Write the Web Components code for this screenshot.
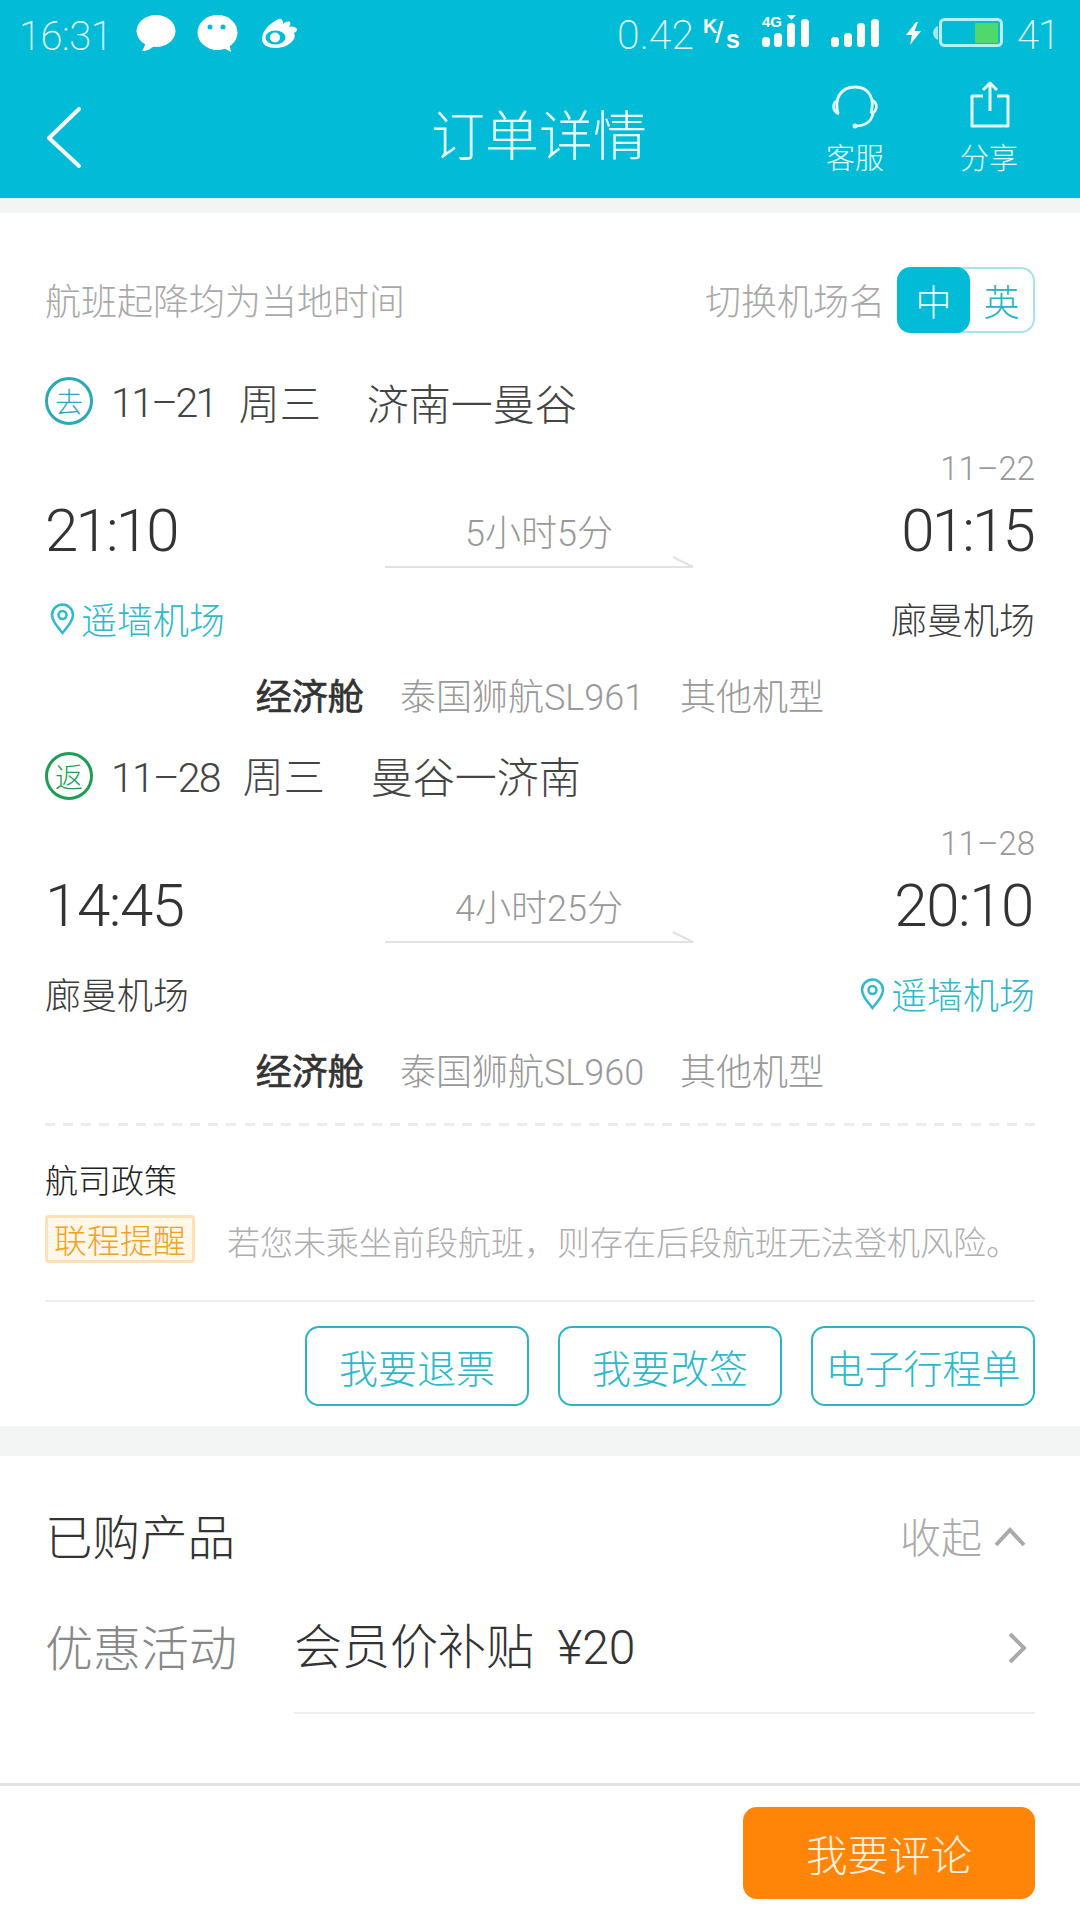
<!DOCTYPE html>
<html lang="zh-CN">
<head>
<meta charset="utf-8">
<title>订单详情</title>
<style>
  html, body { margin: 0; padding: 0; }
  body {
    width: 1080px;
    height: 1920px;
    overflow: hidden;
    display: flex;
    flex-direction: column;
    background: #f3f4f4;
    font-family: Roboto, "Noto Sans CJK SC", sans-serif;
    font-weight: 300;
    color: #333;
  }
</style>
</head>
<body>
  <app-header></app-header>
  <order-card>
    <flight-leg kind="去" color="#2ba8ba" date="11–21" date-spacing="-2.6" nudge="0" route="济南一曼谷" depart="21:10" arrive="01:15"
      time-spacing="-2.8" arrive-date="11–22" duration="5小时5分" from="遥墙机场" to="廊曼机场" pin="from" flight="泰国狮航SL961"></flight-leg>
    <flight-leg kind="返" color="#1f9d55" date="11–28" date-spacing="-1.8" nudge="-2" route="曼谷一济南" depart="14:45" arrive="20:10"
      time-spacing="-1.4" arrive-date="11–28" duration="4小时25分" from="廊曼机场" to="遥墙机场" pin="to" flight="泰国狮航SL960"></flight-leg>
    <policy-note></policy-note>
    <action-button slot="actions">我要退票</action-button>
    <action-button slot="actions">我要改签</action-button>
    <action-button slot="actions">电子行程单</action-button>
  </order-card>
  <product-section></product-section>
  <bottom-bar>我要评论</bottom-bar>

<script>
class AppHeader extends HTMLElement {
  connectedCallback() {
    const shadow = this.attachShadow({ mode: "open" });
    shadow.innerHTML = `
      <style>
        :host { display: block; height: 198px; background: #02bbd6; color: #e6fbff; flex: none; }
        .status { height: 66px; display: flex; align-items: center; padding: 4px 21px 0 19px; box-sizing: border-box; }
        .status svg { display: block; flex: none; }
        .clock { font-size: 40px; font-weight: 200; letter-spacing: -0.5px; width: 117px; margin-top: 2px; }
        .left { display: flex; align-items: center; flex: 1; }
        .speed { font-size: 41px; font-weight: 200; }
        .unit { width: 38px; height: 38px; margin: 0 21px 0 9px; position: relative; font-weight: 700; font-family: "Liberation Sans", sans-serif; color: #fff; line-height: 1; }
        .unit span { position: absolute; }
        .bat { font-size: 40px; font-weight: 200; letter-spacing: -1px; margin-left: 14px; }
        .nav { height: 132px; display: grid; grid-template-columns: 1fr 216px 1fr; align-items: center; padding: 0 24px 0 22px; }
        .back { padding: 12px 0 0 24px; display: flex; }
        .title { font-size: 54px; color: #e6fbff; margin-top: 1px; white-space: nowrap; }
        .actions { display: flex; justify-content: flex-end; align-self: start; padding-top: 14px; }
        .action { width: 134px; display: flex; flex-direction: column; align-items: center; font-size: 29px; line-height: 36px; }
        .action svg { height: 50px; display: block; margin-bottom: 11px; }
      </style>
      <div class="status">
        <div class="left">
          <span class="clock">16:31</span>
          <svg width="40" height="37" viewBox="0 0 40 37" style="margin-top:-4px">
            <ellipse cx="20" cy="16" rx="19.500" ry="16" fill="#fff"/>
            <path d="M9 26c1 3-1 7-3 10 5 0 9-2 12-5z" fill="#fff"/>
          </svg>
          <svg width="41" height="37" viewBox="0 0 41 37" style="margin:-4px 0 0 21px">
            <ellipse cx="20.500" cy="17.500" rx="20" ry="17.500" fill="#fff"/>
            <path d="M25 32l9 5-2-10z" fill="#fff"/>
            <circle cx="13" cy="12" r="2.500" fill="#02bbd6"/>
            <circle cx="26" cy="12" r="2.500" fill="#02bbd6"/>
          </svg>
          <svg width="36" height="30" viewBox="0 0 36 30" style="margin:-4px 0 0 24px">
            <path fill="#fff" d="M0 21C0 14 6 7 13 3c2-1 5-3 6-2 2 1 2 3 2 5 2-2 5-3 7-2 1 1 0 3-1 5 3-1 7 0 8 2 0 2-1 3-3 4 1 2 1 4 0 6-3 5-10 9-18 9C6 30 0 27 0 21z"/>
            <ellipse cx="13.500" cy="19.500" rx="10" ry="7" fill="#02bbd6"/>
            <circle cx="13" cy="19.500" r="5" fill="#fff"/>
          </svg>
        </div>
        <span class="speed">0.42</span>
        <span class="unit"><span style="left:0;top:0;font-size:20px">K</span><span style="left:12px;top:2px;font-size:30px;font-weight:400">/</span><span style="left:23px;top:11px;font-size:25px">s</span></span>
        <svg width="47" height="32" viewBox="0 0 47 32" style="margin:-8px 22px 0 0">
          <text x="0" y="12" font-family="Liberation Sans" font-size="15" font-weight="700" fill="#fff">4G</text>
          <rect x="0" y="22" width="8" height="10" rx="3.500" fill="#fff"/>
          <rect x="12" y="18" width="8" height="14" rx="3.500" fill="#fff"/>
          <rect x="25" y="8" width="8" height="24" rx="3.500" fill="#fff"/>
          <rect x="39" y="4" width="8" height="28" rx="3.500" fill="#fff"/>
          <path d="M25 0h9l-4.500 5z" fill="#fff"/>
        </svg>
        <svg width="48" height="28" viewBox="0 0 48 28" style="margin:-4px 27px 0 0">
          <rect x="0" y="18" width="8" height="10" rx="3.500" fill="#fff"/>
          <rect x="13" y="14" width="8" height="14" rx="3.500" fill="#fff"/>
          <rect x="26" y="4" width="8" height="24" rx="3.500" fill="#fff"/>
          <rect x="40" y="0" width="8" height="28" rx="3.500" fill="#fff"/>
        </svg>
        <svg width="15" height="23" viewBox="0 0 15 23" style="margin:-3px 12px 0 0"><path d="M10 0 0 13h6L4 23l11-14H8.500L12 0z" fill="#fff"/></svg>
        <svg width="70" height="30" viewBox="0 0 70 30" style="margin-top:-5px">
          <path d="M5 8C2 9 0 12 0 15s2 6 5 7z" fill="#9fe6ef"/>
          <rect x="7.500" y="1.500" width="61" height="26" rx="4" fill="none" stroke="#b6f0f4" stroke-width="3"/>
          <rect x="42" y="5" width="23" height="20" fill="#4fd96a"/>
        </svg>
        <span class="bat">41</span>
      </div>
      <div class="nav">
        <div class="back">
          <svg width="36" height="62" viewBox="0 0 36 62"><path d="M33 2 3 31l30 28" fill="none" stroke="#fff" stroke-width="4" stroke-linecap="round" stroke-linejoin="round"/></svg>
        </div>
        <div class="title">订单详情</div>
        <div class="actions">
          <div class="action">
            <svg width="46" height="50" viewBox="0 0 46 50" fill="none" stroke="#e6fbff" stroke-width="2.800">
              <path d="M6 33C2 18 9 7 23 7c14 0 20 11 16 26"/>
              <path d="M6 20c-6 3-6 11 1 14M40 20c6 3 6 11-1 14"/>
              <path d="M41 34c-2 8-9 12-18 12" stroke-linecap="round"/>
              <circle cx="23" cy="46" r="2.500" fill="#e6fbff" stroke="none"/>
            </svg>
            客服
          </div>
          <div class="action">
            <svg width="40" height="50" viewBox="0 0 40 50" fill="none" stroke="#e6fbff" stroke-width="3" stroke-linejoin="round" style="margin-left:2px">
              <path d="M13 16H2v30h36V16H27"/>
              <path d="M20 31V3M13 10l7-7 7 7"/>
            </svg>
            分享
          </div>
        </div>
      </div>`;
  }
}

class OrderCard extends HTMLElement {
  connectedCallback() {
    const shadow = this.attachShadow({ mode: "open" });
    shadow.innerHTML = `
      <style>
        :host { display: block; flex: none; height: 1213px; margin-top: 15px; padding: 0 45px; box-sizing: border-box; background: #fff; overflow: hidden; }
        .top { height: 66px; margin-top: 54px; display: flex; align-items: center; justify-content: space-between; font-size: 36px; color: #a8a8a8; }
        .top > span, .switch > span { position: relative; top: -1px; }
        .switch { display: flex; align-items: center; }
        .switch > span { margin-right: 12px; }
        .legs { margin-top: 35px; }
        .buttons { display: flex; justify-content: flex-end; gap: 29px; margin-top: 24px; }
      </style>
      <div class="top">
        <span>航班起降均为当地时间</span>
        <div class="switch"><span>切换机场名</span><lang-toggle></lang-toggle></div>
      </div>
      <div class="legs"><slot></slot></div>
      <div class="buttons"><slot name="actions"></slot></div>`;
  }
}

class LangToggle extends HTMLElement {
  connectedCallback() {
    const shadow = this.attachShadow({ mode: "open" });
    shadow.innerHTML = `
      <style>
        :host { display: flex; width: 138px; height: 66px; box-sizing: border-box; border: 2px solid #a6e3ec; border-radius: 14px; font-size: 36px; color: #25b3c8; }
        div { display: flex; align-items: center; justify-content: center; }
        .on { width: 73px; margin: -2px 0 -2px -2px; background: #02bbd6; color: #e6fbff; border-radius: 14px; }
        .off { flex: 1; }
      </style>
      <div class="on">中</div><div class="off">英</div>`;
  }
}

class FlightLeg extends HTMLElement {
  connectedCallback() {
    const a = (n) => this.getAttribute(n);
    const pin = `<svg width="25" height="32" viewBox="0 0 25 32"><path d="M12.500 30C6 22 2 17 2 12a10.500 10.500 0 0 1 21 0c0 5-4 10-10.500 18z" fill="none" stroke="#30b8cc" stroke-width="2.500"/><circle cx="12.500" cy="12" r="4" fill="none" stroke="#30b8cc" stroke-width="2.500"/></svg>`;
    const airport = (name, on) => on
      ? `<span class="port on">${pin}${name}</span>`
      : `<span class="port">${name}</span>`;
    const shadow = this.attachShadow({ mode: "open" });
    shadow.innerHTML = `
      <style>
        :host { display: block; height: 353px; margin-bottom: 22px; }
        .head { height: 66px; display: flex; align-items: center; font-size: 41px; color: #444; }
        .kind { width: 48px; height: 48px; box-sizing: border-box; border: 3px solid ${a("color")}; border-radius: 50%; color: ${a("color")}; font-size: 28px; display: flex; align-items: center; justify-content: center; margin-right: 18px; flex: none; }
        .dt { letter-spacing: ${a("date-spacing")}px; margin-top: 4px; }
        .day { margin-left: 23px; margin-top: ${a("nudge") * 2}px; }
        .route { margin-left: 46px; margin-top: ${a("nudge") * 2}px; font-size: 42px; }
        .date { height: 36px; margin-top: 17px; text-align: right; font-size: 33px; line-height: 36px; color: #999; }
        .times { height: 76px; margin-top: 5px; display: flex; align-items: center; justify-content: space-between; font-size: 60px; color: #333; position: relative; letter-spacing: ${a("time-spacing")}px; }
        .times > span:last-child { margin-right: 2px; }
        .mid { position: absolute; left: 340px; width: 308px; top: 0; height: 76px; font-size: 36px; letter-spacing: 0; color: #999; text-align: center; line-height: 50px; padding-top: 17px; box-sizing: border-box; }
        .mid svg { position: absolute; left: 0; bottom: 0; display: block; }
        .ports { height: 50px; margin-top: 25px; display: flex; align-items: center; justify-content: space-between; font-size: 36px; color: #3c3c3c; }
        .port { display: flex; align-items: center; }
        .port.on { color: #30b8cc; }
        .port svg { margin: 2px 6px 0 5px; }
        .cls { height: 50px; margin-top: 26px; display: flex; align-items: center; justify-content: center; gap: 36px; font-size: 36px; color: #999; }
        .cls b { color: #333; font-weight: 400; -webkit-text-stroke: 0.7px #333; }
      </style>
      <div class="head">
        <span class="kind">${a("kind")}</span>
        <span class="dt">${a("date")}</span>
        <span class="day">周三</span>
        <span class="route">${a("route")}</span>
      </div>
      <div class="date">${a("arrive-date")}</div>
      <div class="times">
        <span>${a("depart")}</span>
        <div class="mid">${a("duration")}
          <svg width="310" height="12" viewBox="0 0 310 12"><path d="M0 11h308L288 1" fill="none" stroke="#e2e2e2" stroke-width="2"/></svg>
        </div>
        <span>${a("arrive")}</span>
      </div>
      <div class="ports">${airport(a("from"), a("pin") === "from")}${airport(a("to"), a("pin") === "to")}</div>
      <div class="cls"><b>经济舱</b><span>${a("flight")}</span><span>其他机型</span></div>`;
  }
}

class PolicyNote extends HTMLElement {
  connectedCallback() {
    const shadow = this.attachShadow({ mode: "open" });
    shadow.innerHTML = `
      <style>
        :host { display: block; margin-top: 27px; height: 179px; box-sizing: border-box; border-bottom: 2px solid #eeeeee; }
        .dash { height: 3px; background: repeating-linear-gradient(90deg, #ececec 0 10px, transparent 10px 18.148px); }
        .title { margin-top: 34px; height: 44px; line-height: 44px; font-size: 33px; color: #222; }
        .row { margin-top: 9px; display: flex; align-items: center; }
        .tag { width: 150px; height: 48px; box-sizing: border-box; border: 3px solid #fde0b6; border-radius: 4px; background: #fff7e8; color: #f3a21f; font-size: 33px; display: flex; align-items: center; justify-content: center; flex: none; }
        .text { margin: 4px 0 0 32px; font-size: 33px; color: #aeaeae; white-space: nowrap; }
      </style>
      <div class="dash"></div>
      <div class="title">航司政策</div>
      <div class="row"><span class="tag">联程提醒</span><span class="text">若您未乘坐前段航班，则存在后段航班无法登机风险。</span></div>`;
  }
}

class ActionButton extends HTMLElement {
  connectedCallback() {
    const shadow = this.attachShadow({ mode: "open" });
    shadow.innerHTML = `
      <style>
        :host { display: flex; width: 224px; height: 80px; box-sizing: border-box; border: 2px solid #2db3c7; border-radius: 14px; align-items: center; justify-content: center; font-size: 39px; color: #2db8cc; white-space: nowrap; }
      </style>
      <slot></slot>`;
  }
}

class ProductSection extends HTMLElement {
  connectedCallback() {
    const shadow = this.attachShadow({ mode: "open" });
    shadow.innerHTML = `
      <style>
        :host { display: block; flex: none; margin-top: 30px; height: 330px; padding: 0 45px; box-sizing: border-box; background: #fff; border-bottom: 3px solid #e4e4e4; }
        .head { height: 162px; padding-bottom: 6px; box-sizing: border-box; display: flex; align-items: center; justify-content: space-between; font-size: 47.500px; color: #333; }
        .fold { display: flex; align-items: center; font-size: 41px; color: #aaa; margin-top: 2px; }
        .fold svg { margin: 4px 9px 0 12px; }
        .row { display: flex; height: 66px; margin-top: -6px; align-items: center; font-size: 48px; }
        .label { width: 249px; color: #888; flex: none; }
        .val { flex: 1; display: flex; align-items: center; justify-content: space-between; color: #333; }
        .val span { margin-top: -5px; }
        .val svg { margin: 6px 8px 0 0; }
        .rule { margin: 34px 0 0 249px; border-top: 2px solid #eeeeee; }
      </style>
      <div class="head">
        <span>已购产品</span>
        <span class="fold">收起<svg width="32" height="20" viewBox="0 0 32 20"><path d="M2 18 16 3l14 15" fill="none" stroke="#aaa" stroke-width="4"/></svg></span>
      </div>
      <div class="row">
        <span class="label">优惠活动</span>
        <div class="val"><span>会员价补贴&nbsp; ¥20</span><svg width="20" height="32" viewBox="0 0 20 32"><path d="M3 2l14 14L3 30" fill="none" stroke="#aaa" stroke-width="4"/></svg></div>
      </div>
      <div class="rule"></div>`;
  }
}

class BottomBar extends HTMLElement {
  connectedCallback() {
    const shadow = this.attachShadow({ mode: "open" });
    shadow.innerHTML = `
      <style>
        :host { display: flex; flex: 1; justify-content: flex-end; padding: 21px 45px 0 0; box-sizing: border-box; background: #fff; }
        div { width: 292px; height: 92px; background: #ff8508; border-radius: 14px; color: #ffefdf; font-size: 41.500px; display: flex; align-items: center; justify-content: center; }
      </style>
      <div><slot></slot></div>`;
  }
}

customElements.define("app-header", AppHeader);
customElements.define("order-card", OrderCard);
customElements.define("lang-toggle", LangToggle);
customElements.define("flight-leg", FlightLeg);
customElements.define("policy-note", PolicyNote);
customElements.define("action-button", ActionButton);
customElements.define("product-section", ProductSection);
customElements.define("bottom-bar", BottomBar);
</script>
</body>
</html>
